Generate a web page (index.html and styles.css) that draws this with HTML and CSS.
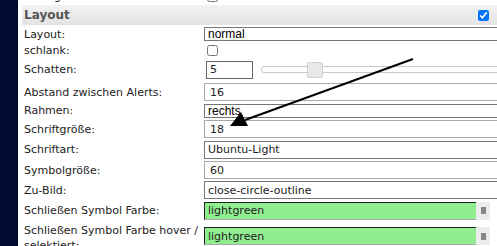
FILE: index.html
```
<!DOCTYPE html>
<html lang="de">
<head>
    <meta charset="UTF-8">
    <title>Layout</title>
    <link rel="stylesheet" href="styles.css">
</head>
<body>
    <div class="page">
        <div class="sidebar"></div>
        <div class="panel">
            <div class="row row-cut"><label>Anzeig:</label><div class="value"><input type="checkbox"></div></div>
            <div class="section"><span>Layout</span><input type="checkbox" checked></div>
            <div class="row row-select"><label>Layout:</label><div class="value"><div class="select">normal</div></div></div>
            <div class="row row-check"><label>schlank:</label><div class="value"><input type="checkbox"></div></div>
            <div class="row row-slider"><label>Schatten:</label>
                <div class="value">
                    <input class="small" type="text" value="5">
                    <div class="track"><div class="thumb"></div></div>
                </div>
            </div>
            <div class="row"><label>Abstand zwischen Alerts:</label><div class="value"><input class="text" type="text" value="16"></div></div>
            <div class="row row-select2"><label>Rahmen:</label><div class="value"><div class="select">rechts</div></div></div>
            <div class="row"><label>Schriftgröße:</label><div class="value"><input class="text" type="text" value="18"></div></div>
            <div class="row row-tall"><label>Schriftart:</label><div class="value"><input class="text dark" type="text" value="Ubuntu-Light"></div></div>
            <div class="row"><label>Symbolgröße:</label><div class="value"><input class="text" type="text" value="60"></div></div>
            <div class="row"><label>Zu-Bild:</label><div class="value"><input class="text dark" type="text" value="close-circle-outline"></div></div>
            <div class="row row-tall"><label>Schließen Symbol Farbe:</label>
                <div class="value color"><input class="green" type="text" value="lightgreen"><span class="picker"><i></i></span></div>
            </div>
            <div class="row row-two"><label>Schließen Symbol Farbe hover / selektiert:</label>
                <div class="value color"><input class="green" type="text" value="lightgreen"><span class="picker"><i></i></span></div>
            </div>
        </div>
        <svg class="arrow" width="497" height="246" viewBox="0 0 497 246">
            <line x1="413" y1="59" x2="245" y2="120" stroke="#000" stroke-width="2"/>
            <polygon points="230,126 241,112 248,126" fill="#000"/>
        </svg>
    </div>
</body>
</html>
```

FILE: styles.css
```
body {
    margin: 0;
    background: #fff;
    font-family: "DejaVu Sans", Verdana, sans-serif;
    font-size: 11px;
    color: #222;
    overflow: hidden;
}

.page {
    display: flex;
    gap: 4px;
    width: 497px;
    height: 246px;
    position: relative;
    overflow: hidden;
}

.sidebar {
    width: 18px;
    flex-shrink: 0;
    background: #020a30;
}

.panel {
    width: 490px;
    flex-shrink: 0;
    margin-top: -13px;
}

.row {
    display: flex;
    align-items: center;
    height: 20px;
}

.row label {
    width: 180px;
    padding-left: 2px;
    flex-shrink: 0;
}

.value {
    display: flex;
    align-items: center;
    flex: 1;
}

.row-cut { height: 18px; }
.row-select { height: 18px; }
.row-check { height: 14px; }
.row-slider { height: 25px; }
.row-select2 { height: 17px; }
.row-tall { height: 21px; }
.row-two {
    height: 30px;
    align-items: center;
}

.row-two label {
    line-height: 15px;
    padding-top: 3px;
}

.section {
    display: flex;
    align-items: center;
    justify-content: space-between;
    height: 20px;
    padding: 0 23px 0 2px;
    background: linear-gradient(#f2f2f2, #e3e3e3);
    font-weight: bold;
    font-size: 12px;
    color: #555;
}

.section input,
.value input[type="checkbox"] {
    width: 11px;
    height: 11px;
    margin: 0 0 0 3px;
}

.section input { margin: 0; }

.select {
    width: 300px;
    height: 14px;
    box-sizing: border-box;
    border: 1px solid #767676;
    font-family: "Liberation Sans", Arial, sans-serif;
    font-size: 12px;
    line-height: 12px;
    padding-left: 3px;
    color: #000;
}

input[type="text"] {
    font-family: "DejaVu Sans", Verdana, sans-serif;
    font-size: 11px;
    color: #222;
    box-sizing: border-box;
    height: 18px;
    margin: 0;
    outline: none;
}

.text {
    width: 300px;
    border: 1px solid #a9a9a9;
    padding: 0 5px;
}

.text.dark {
    border-color: #777;
    padding: 0 3px;
}

.small {
    width: 47px;
    height: 17px;
    margin-left: 2px !important;
    border: 1px solid #666;
    padding: 0 3px;
}

.track {
    width: 250px;
    height: 5px;
    margin-left: 8px;
    border: 1px solid #c8c8c8;
    border-radius: 3px;
    background: #fff;
    display: flex;
    align-items: center;
}

.thumb {
    width: 14px;
    height: 14px;
    margin-left: 45px;
    border: 1px solid #d0d0d0;
    border-radius: 2px;
    background: #e8e8e8;
    flex-shrink: 0;
}

.color {
    width: 286px;
    flex: none;
}

.green {
    flex: 1;
    min-width: 0;
    background: #90ee90;
    border: none;
    border-top: 1px solid #222;
    border-left: 1px solid #222;
    border-bottom: 1px solid #aaa;
    padding: 0 3px;
}

.picker {
    width: 14px;
    height: 18px;
    background: #ececec;
    display: flex;
    align-items: center;
    justify-content: center;
}

.picker i {
    width: 5px;
    height: 7px;
    background: #888;
}

.arrow {
    position: absolute;
    left: 0;
    top: 0;
    pointer-events: none;
}
```
